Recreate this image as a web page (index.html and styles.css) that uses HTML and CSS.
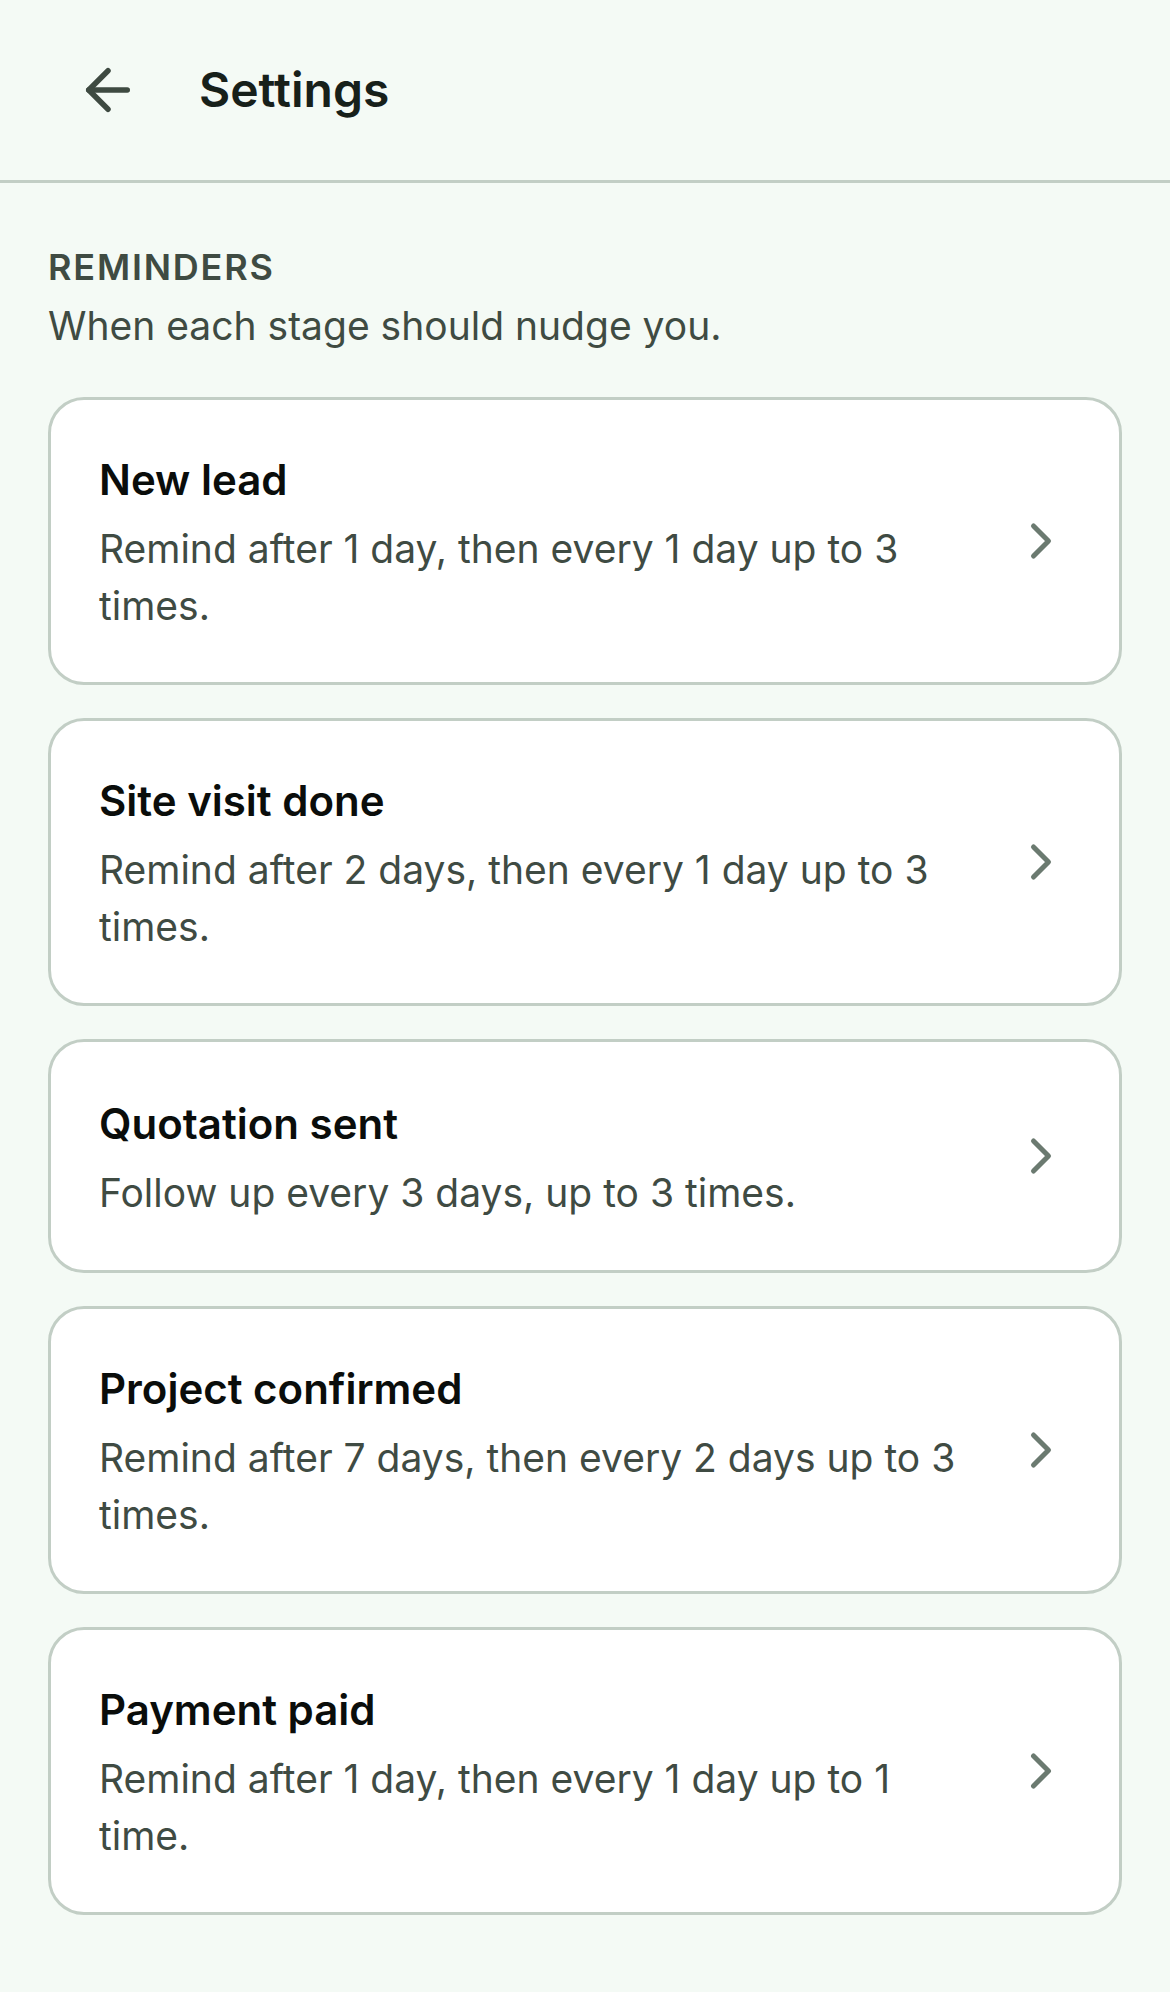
FILE: index.html
```html
<!DOCTYPE html>
<html lang="en">
<head>
<meta charset="utf-8">
<title>Settings</title>
<link rel="stylesheet" href="styles.css">
</head>
<body>
<header class="topbar">
  <button class="back" aria-label="Back">
    <svg viewBox="0 0 24 24" width="66" height="66" fill="none" stroke="currentColor" stroke-width="2" stroke-linecap="round" stroke-linejoin="round"><path d="m12 19-7-7 7-7"/><path d="M19 12H5"/></svg>
  </button>
  <h1 class="page-title">Settings</h1>
</header>
<main class="content">
  <section class="section">
    <h2 class="section-label">REMINDERS</h2>
    <p class="section-sub">When each stage should nudge you.</p>
    <ul class="stage-list">
      <li class="stage-card">
        <div class="stage-text">
          <h3 class="stage-name">New lead</h3>
          <p class="stage-desc">Remind after 1 day, then every 1 day up to 3 times.</p>
        </div>
        <svg class="chev" viewBox="0 0 24 24" width="60" height="60" fill="none" stroke="currentColor" stroke-width="2" stroke-linecap="round" stroke-linejoin="round"><path d="m9 18 6-6-6-6"/></svg>
      </li>
      <li class="stage-card">
        <div class="stage-text">
          <h3 class="stage-name">Site visit done</h3>
          <p class="stage-desc">Remind after 2 days, then every 1 day up to 3 times.</p>
        </div>
        <svg class="chev" viewBox="0 0 24 24" width="60" height="60" fill="none" stroke="currentColor" stroke-width="2" stroke-linecap="round" stroke-linejoin="round"><path d="m9 18 6-6-6-6"/></svg>
      </li>
      <li class="stage-card">
        <div class="stage-text">
          <h3 class="stage-name">Quotation sent</h3>
          <p class="stage-desc">Follow up every 3 days, up to 3 times.</p>
        </div>
        <svg class="chev" viewBox="0 0 24 24" width="60" height="60" fill="none" stroke="currentColor" stroke-width="2" stroke-linecap="round" stroke-linejoin="round"><path d="m9 18 6-6-6-6"/></svg>
      </li>
      <li class="stage-card">
        <div class="stage-text">
          <h3 class="stage-name">Project confirmed</h3>
          <p class="stage-desc">Remind after 7 days, then every 2 days up to 3 times.</p>
        </div>
        <svg class="chev" viewBox="0 0 24 24" width="60" height="60" fill="none" stroke="currentColor" stroke-width="2" stroke-linecap="round" stroke-linejoin="round"><path d="m9 18 6-6-6-6"/></svg>
      </li>
      <li class="stage-card">
        <div class="stage-text">
          <h3 class="stage-name">Payment paid</h3>
          <p class="stage-desc">Remind after 1 day, then every 1 day up to 1 time.</p>
        </div>
        <svg class="chev" viewBox="0 0 24 24" width="60" height="60" fill="none" stroke="currentColor" stroke-width="2" stroke-linecap="round" stroke-linejoin="round"><path d="m9 18 6-6-6-6"/></svg>
      </li>
    </ul>
  </section>
</main>
</body>
</html>
```
FILE: styles.css
```css
html {
  background: #f4faf5;
}
body {
  margin: 0;
  background: #f4faf5;
  font-family: Inter, "Noto Sans", "Liberation Sans", sans-serif;
  color: #161e18;
}
.topbar {
  height: 180px;
  display: flex;
  align-items: center;
  gap: 58px;
  padding-left: 75px;
  border-bottom: 3px solid #c2cec5;
}
.back {
  display: flex;
  align-items: center;
  justify-content: center;
  width: 66px;
  height: 66px;
  padding: 0;
  border: 0;
  background: none;
  color: #3e4a41;
}
.back svg {
  display: block;
}
.page-title {
  margin: 0;
  font-size: 48px;
  line-height: 60px;
  font-weight: 600;
  color: #17201a;
}
.content {
  padding: 60px 48px 0;
}
.section-label {
  margin: 0;
  font-size: 36px;
  line-height: 48px;
  font-weight: 600;
  letter-spacing: 0.05em;
  color: #3f4b42;
}
.section-sub {
  margin: 6px 0 43px;
  font-size: 39px;
  line-height: 57px;
  font-weight: 400;
  color: #3f4b42;
}
.stage-list {
  list-style: none;
  margin: 0;
  padding: 0;
  display: flex;
  flex-direction: column;
  gap: 33px;
}
.stage-card {
  box-sizing: border-box;
  min-height: 234px;
  display: flex;
  align-items: center;
  gap: 36px;
  padding: 48px;
  background: #ffffff;
  border: 3px solid #c2cec5;
  border-radius: 36px;
}
.stage-text {
  flex: 1;
  min-width: 0;
}
.stage-name {
  margin: 0 0 9px;
  font-size: 42px;
  line-height: 63px;
  font-weight: 600;
  color: #0a0d0b;
}
.stage-desc {
  margin: 0;
  font-size: 39px;
  line-height: 57px;
  font-weight: 400;
  color: #3f4b43;
}
.chev {
  flex-shrink: 0;
  display: block;
  color: #6b7a70;
}
```
